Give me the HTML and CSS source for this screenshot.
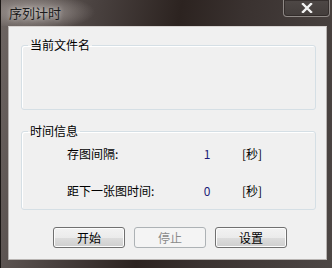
FILE: index.html
```
<!DOCTYPE html>
<html lang="zh-CN">
<head>
    <meta charset="UTF-8">
    <title>序列计时</title>
    <link rel="stylesheet" href="styles.css">
</head>
<body>
    <div class="window">
        <div class="titlebar">
            <span class="title">序列计时</span>
            <button class="close-btn" type="button">
                <svg width="12" height="10" viewBox="0 0 12 10">
                    <path d="M2 1 L10 9 M10 1 L2 9" stroke="#f2f2f2" stroke-width="2.4" stroke-linecap="square"/>
                </svg>
            </button>
        </div>
        <div class="client">
            <fieldset class="group group-file">
                <legend>当前文件名</legend>
            </fieldset>

            <fieldset class="group group-time">
                <legend>时间信息</legend>
                <div class="row">
                    <span class="label">存图间隔:</span>
                    <span class="value">1</span>
                    <span class="unit">[秒]</span>
                </div>
                <div class="row">
                    <span class="label">距下一张图时间:</span>
                    <span class="value">0</span>
                    <span class="unit">[秒]</span>
                </div>
            </fieldset>

            <div class="buttons">
                <button type="button" class="btn">开始</button>
                <button type="button" class="btn" disabled>停止</button>
                <button type="button" class="btn">设置</button>
            </div>
        </div>
    </div>
</body>
</html>
```

FILE: styles.css
```
html, body {
    margin: 0;
    padding: 0;
}
body {
    font-family: "Noto Sans CJK SC", "DejaVu Sans", sans-serif;
    font-size: 12px;
    color: #000;
    background: #2a2422;
}
.window {
    width: 332px;
    height: 268px;
    box-sizing: border-box;
    padding: 0 5px 8px 7px;
    background: linear-gradient(100deg, #6e6663 0%, #4a4240 25%, #2c2320 48%, #3a3230 65%, #4d4745 100%);
    border-left: 1px solid #1a1614;
    display: flex;
    flex-direction: column;
}
.titlebar {
    height: 26px;
    display: flex;
    align-items: flex-start;
    margin-left: -7px;
    margin-right: -5px;
    position: relative;
    background: radial-gradient(ellipse 60px 18px at 34px 12px, rgba(190, 182, 178, 0.75), rgba(190, 182, 178, 0) 100%);
}
.title {
    margin: 4px 0 0 8px;
    font-size: 13px;
    line-height: 17px;
    color: #1c1c1c;
    text-shadow: 0 0 4px rgba(255, 255, 255, 0.6);
}
.close-btn {
    position: absolute;
    top: -1px;
    right: 2px;
    width: 47px;
    height: 18px;
    padding: 0;
    border: 1px solid rgba(200, 195, 192, 0.55);
    border-radius: 0 0 4px 4px;
    background: linear-gradient(#4e4846, #433d3b);
    box-shadow: inset 0 0 0 1px rgba(40, 34, 32, 0.6);
    display: flex;
    align-items: center;
    justify-content: center;
}
.client {
    flex: 1;
    background: #f0f0f0;
    border: 1px solid #b8b4b2;
    border-top-color: #d8d4d2;
    padding: 11px 10px 0 12px;
}
.group {
    margin: 0;
    padding: 0;
    border: 1px solid #d5dfe5;
    border-radius: 3px;
    box-shadow: inset 1px 1px 0 #fff;
    box-sizing: border-box;
}
.group legend {
    margin-left: 6px;
    padding: 0 2px;
    line-height: 14px;
}
.group-file {
    height: 72px;
}
.group-time {
    height: 86px;
    margin-top: 14px;
    padding-top: 8px;
}
.row {
    display: flex;
    line-height: 16px;
    padding-left: 45px;
    margin-bottom: 21px;
}
.label {
    width: 120px;
}
.value {
    width: 40px;
    text-align: center;
    color: #1c1c78;
}
.unit {
    margin-left: 15px;
}
.buttons {
    display: flex;
    gap: 9px;
    padding-left: 32px;
    margin-top: 17px;
}
.btn {
    width: 72px;
    height: 21px;
    padding: 0;
    font-family: inherit;
    font-size: 12px;
    color: #000;
    border: 1px solid #707070;
    border-radius: 3px;
    background: linear-gradient(#f2f2f2 0%, #ebebeb 50%, #dddddd 51%, #cfcfcf 100%);
    box-shadow: inset 0 0 0 1px #fcfcfc;
}
.btn:disabled {
    color: #8a8a8a;
    border-color: #adb2b5;
    background: #f4f4f4;
    box-shadow: none;
}
```
